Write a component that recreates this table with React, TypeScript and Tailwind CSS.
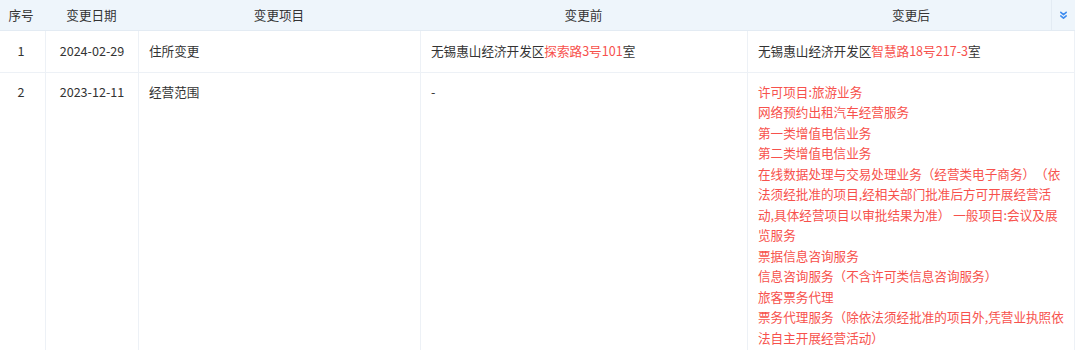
import React from 'react';

type Part = { t: string; red?: boolean };

const rows: {
  no: number;
  date: string;
  item: string;
  before: Part[] | null;
  after: Part[][];
}[] = [
  {
    no: 1,
    date: '2024-02-29',
    item: '住所变更',
    before: [{ t: '无锡惠山经济开发区' }, { t: '探索路3号101', red: true }, { t: '室' }],
    after: [[{ t: '无锡惠山经济开发区' }, { t: '智慧路18号217-3', red: true }, { t: '室' }]],
  },
  {
    no: 2,
    date: '2023-12-11',
    item: '经营范围',
    before: null,
    after: [
      '许可项目:旅游业务',
      '网络预约出租汽车经营服务',
      '第一类增值电信业务',
      '第二类增值电信业务',
      '在线数据处理与交易处理业务（经营类电子商务）（依',
      '法须经批准的项目,经相关部门批准后方可开展经营活',
      '动,具体经营项目以审批结果为准） 一般项目:会议及展',
      '览服务',
      '票据信息咨询服务',
      '信息咨询服务（不含许可类信息咨询服务）',
      '旅客票务代理',
      '票务代理服务（除依法须经批准的项目外,凭营业执照依',
      '法自主开展经营活动）',
    ].map((t) => [{ t, red: true }]),
  },
];

const Line = ({ parts }: { parts: Part[] }) => (
  <div className="whitespace-pre">
    {parts.map((p, i) => (
      <span key={i} className={p.red ? 'text-[#f7514c]' : ''}>
        {p.t}
      </span>
    ))}
  </div>
);

export default function App() {
  return (
    <div
      className="w-[1080px] h-[350px] overflow-hidden bg-white text-[12.6px] text-[#333] [text-spacing-trim:space-all]"
      style={{ fontFamily: '"Noto Sans CJK SC", "Noto Sans", sans-serif' }}
    >
      <div className="w-[1075px]">
        {/* 表头 */}
        <div className="grid grid-cols-[45px_93px_282px_327px_328px] h-[31px] bg-[#eef5fb] items-center border-b border-[#e3ebf3]">
          <div className="text-center -ml-[3px]">序号</div>
          <div className="text-center">变更日期</div>
          <div className="text-center">变更项目</div>
          <div className="text-center">变更前</div>
          <div className="relative h-full flex items-center justify-center">
            变更后
            <div className="absolute right-0 top-0 h-full w-[24px] border-l border-[#e3ebf3] flex items-center justify-center">
              <svg width="9" height="9" viewBox="0 0 10 10" fill="none" stroke="#3d8bef" strokeWidth="1.8" strokeLinecap="round" strokeLinejoin="round">
                <path d="M2 1.5 5 4 8 1.5" />
                <path d="M2 5.5 5 8 8 5.5" />
              </svg>
            </div>
          </div>
        </div>

        {rows.map((r) => (
          <div
            key={r.no}
            className="grid grid-cols-[45px_93px_282px_327px_328px] border-b border-[#edf1f6] leading-[20.5px]"
          >
            <div className={`text-center -ml-[3px] ${r.after.length > 1 ? 'pt-[9px]' : 'py-[10px]'}`}>{r.no}</div>
            <div className={`text-center border-l border-[#edf1f6] ${r.after.length > 1 ? 'pt-[9px]' : 'py-[10px]'}`}>{r.date}</div>
            <div className={`border-l border-[#edf1f6] pl-[10px] ${r.after.length > 1 ? 'pt-[9px]' : 'py-[10px]'}`}>{r.item}</div>
            <div className={`border-l border-[#edf1f6] pl-[10px] ${r.after.length > 1 ? 'pt-[9px]' : 'py-[10px]'}`}>
              {r.before ? <Line parts={r.before} /> : '-'}
            </div>
            <div className={`border-l border-r border-[#edf1f6] pl-[10px] ${r.after.length > 1 ? 'pt-[9px] pb-[10px]' : 'py-[10px]'}`}>
              {r.after.map((l, i) => (
                <Line key={i} parts={l} />
              ))}
            </div>
          </div>
        ))}
      </div>
    </div>
  );
}
